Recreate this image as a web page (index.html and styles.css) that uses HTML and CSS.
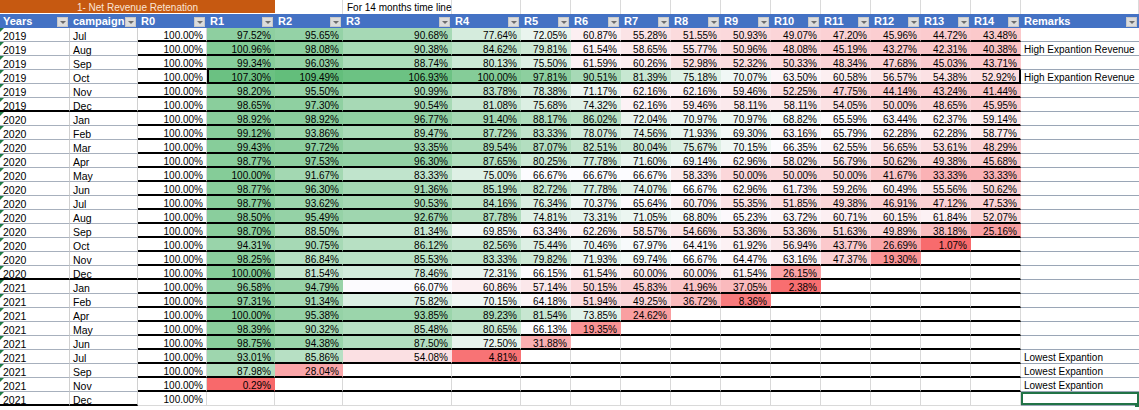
FILE: index.html
```html
<!DOCTYPE html>
<html lang="en">
<head>
<meta charset="utf-8">
<title>Net Revenue Retenation</title>
<link rel="stylesheet" href="styles.css">
</head>
<body>
<div class="sheet" id="sheet">
  <div class="cell title">1- Net Revenue Retenation</div>
  <div class="cell top"></div>
  <div class="cell top note">For 14 months time line</div>
  <div class="cell top"></div>
  <div class="cell top"></div>
  <div class="cell top"></div>
  <div class="cell top"></div>
  <div class="cell top"></div>
  <div class="cell top"></div>
  <div class="cell top"></div>
  <div class="cell top"></div>
  <div class="cell top"></div>
  <div class="cell top"></div>
  <div class="cell top"></div>
  <div class="cell top"></div>

  <div class="cell hd">Years<span class="dd"></span></div>
  <div class="cell hd">campaign<span class="dd"></span></div>
  <div class="cell hd">R0<span class="dd"></span></div>
  <div class="cell hd">R1<span class="dd"></span></div>
  <div class="cell hd">R2<span class="dd"></span></div>
  <div class="cell hd">R3<span class="dd"></span></div>
  <div class="cell hd">R4<span class="dd"></span></div>
  <div class="cell hd">R5<span class="dd"></span></div>
  <div class="cell hd">R6<span class="dd"></span></div>
  <div class="cell hd">R7<span class="dd"></span></div>
  <div class="cell hd">R8<span class="dd"></span></div>
  <div class="cell hd">R9<span class="dd"></span></div>
  <div class="cell hd">R10<span class="dd"></span></div>
  <div class="cell hd">R11<span class="dd"></span></div>
  <div class="cell hd">R12<span class="dd"></span></div>
  <div class="cell hd">R13<span class="dd"></span></div>
  <div class="cell hd">R14<span class="dd"></span></div>
  <div class="cell hd">Remarks<span class="dd"></span></div>
</div>
<script src="script.js"></script>
</body>
</html>
```

FILE: styles.css
```css
html, body {
  margin: 0;
  padding: 0;
  background: #ffffff;
  overflow: hidden;
}

body {
  width: 1139px;
  height: 410px;
  font-family: "Liberation Sans", Arial, sans-serif;
  color: #000;
}

.sheet {
  display: grid;
  grid-template-columns: 70px 68px 69px 68px 68px 109px 69px repeat(10, 50px) 118px;
  grid-auto-rows: 14px;
}

.cell {
  box-sizing: border-box;
  white-space: nowrap;
  font-size: 10px;
  line-height: 12px;
  padding-top: 2px;
}

/* row 0 */
.title {
  grid-column: span 4;
  background: #c65911;
  color: #fbe5d6;
  text-align: center;
  height: 13px;
}

.top {
  border-right: 1px solid #dadada;
}

.note {
  padding-left: 4px;
  overflow: visible;
}

/* header row */
.hd {
  position: relative;
  background: #4472c4;
  color: #ffffff;
  font-weight: bold;
  font-size: 11px;
  line-height: 13px;
  padding-top: 1px;
  padding-left: 3px;
  overflow: hidden;
}

.dd {
  position: absolute;
  right: 2px;
  top: 3px;
  width: 11px;
  height: 10px;
  background: #dcdcdc;
  box-sizing: border-box;
  border: 1px solid #c8c8c8;
}

.dd::after {
  content: "";
  position: absolute;
  left: 2px;
  top: 3px;
  border-left: 3px solid transparent;
  border-right: 3px solid transparent;
  border-top: 3px solid #6d6d6d;
}

/* data cells */
.yr,
.cp {
  font-size: 10.5px;
  padding-left: 3px;
  border-right: 1px solid #d0d0d0;
  border-bottom: 1px solid #a7b0bd;
}

.yr {
  position: relative;
}

.yr::before {
  content: "";
  position: absolute;
  left: 0;
  top: 0;
  border-top: 4px solid #1e7b45;
  border-right: 4px solid transparent;
}

.yr.end,
.cp.end {
  border-bottom: 2px solid #000;
}

.num {
  text-align: right;
  padding-right: 3px;
  border-right: 1px solid #d9d9d9;
  border-bottom: 2px solid #000;
}

.num.fill {
  border-right-color: transparent;
}

.num.last {
  border-bottom: 1px solid #d9d9d9;
}

.num.bl {
  border-left: 2px solid #000;
}

.num.br {
  border-right: 2px solid #000;
}

.rm {
  padding-left: 3px;
  border-bottom: 1px solid #9aa6b6;
}

.rm.sel {
  box-shadow: inset 0 0 0 2px #217346;
  position: relative;
}

.rm.sel::after {
  content: "";
  position: absolute;
  right: 0;
  bottom: -2px;
  width: 4px;
  height: 4px;
  background: #217346;
}
```

FILE: script.js
```js
(function () {
  var rows = [
    ['2019', 'Jul', [97.52, 95.65, 90.68, 77.64, 72.05, 60.87, 55.28, 51.55, 50.93, 49.07, 47.20, 45.96, 44.72, 43.48], ''],
    ['2019', 'Aug', [100.96, 98.08, 90.38, 84.62, 79.81, 61.54, 58.65, 55.77, 50.96, 48.08, 45.19, 43.27, 42.31, 40.38], 'High Expantion Revenue'],
    ['2019', 'Sep', [99.34, 96.03, 88.74, 80.13, 75.50, 61.59, 60.26, 52.98, 52.32, 50.33, 48.34, 47.68, 45.03, 43.71], ''],
    ['2019', 'Oct', [107.30, 109.49, 106.93, 100.00, 97.81, 90.51, 81.39, 75.18, 70.07, 63.50, 60.58, 56.57, 54.38, 52.92], 'High Expantion Revenue'],
    ['2019', 'Nov', [98.20, 95.50, 90.99, 83.78, 78.38, 71.17, 62.16, 62.16, 59.46, 52.25, 47.75, 44.14, 43.24, 41.44], ''],
    ['2019', 'Dec', [98.65, 97.30, 90.54, 81.08, 75.68, 74.32, 62.16, 59.46, 58.11, 58.11, 54.05, 50.00, 48.65, 45.95], ''],
    ['2020', 'Jan', [98.92, 98.92, 96.77, 91.40, 88.17, 86.02, 72.04, 70.97, 70.97, 68.82, 65.59, 63.44, 62.37, 59.14], ''],
    ['2020', 'Feb', [99.12, 93.86, 89.47, 87.72, 83.33, 78.07, 74.56, 71.93, 69.30, 63.16, 65.79, 62.28, 62.28, 58.77], ''],
    ['2020', 'Mar', [99.43, 97.72, 93.35, 89.54, 87.07, 82.51, 80.04, 75.67, 70.15, 66.35, 62.55, 56.65, 53.61, 48.29], ''],
    ['2020', 'Apr', [98.77, 97.53, 96.30, 87.65, 80.25, 77.78, 71.60, 69.14, 62.96, 58.02, 56.79, 50.62, 49.38, 45.68], ''],
    ['2020', 'May', [100.00, 91.67, 83.33, 75.00, 66.67, 66.67, 66.67, 58.33, 50.00, 50.00, 50.00, 41.67, 33.33, 33.33], ''],
    ['2020', 'Jun', [98.77, 96.30, 91.36, 85.19, 82.72, 77.78, 74.07, 66.67, 62.96, 61.73, 59.26, 60.49, 55.56, 50.62], ''],
    ['2020', 'Jul', [98.77, 93.62, 90.53, 84.16, 76.34, 70.37, 65.64, 60.70, 55.35, 51.85, 49.38, 46.91, 47.12, 47.53], ''],
    ['2020', 'Aug', [98.50, 95.49, 92.67, 87.78, 74.81, 73.31, 71.05, 68.80, 65.23, 63.72, 60.71, 60.15, 61.84, 52.07], ''],
    ['2020', 'Sep', [98.70, 88.50, 81.34, 69.85, 63.34, 62.26, 58.57, 54.66, 53.36, 53.36, 51.63, 49.89, 38.18, 25.16], ''],
    ['2020', 'Oct', [94.31, 90.75, 86.12, 82.56, 75.44, 70.46, 67.97, 64.41, 61.92, 56.94, 43.77, 26.69, 1.07], ''],
    ['2020', 'Nov', [98.25, 86.84, 85.53, 83.33, 79.82, 71.93, 69.74, 66.67, 64.47, 63.16, 47.37, 19.30], ''],
    ['2020', 'Dec', [100.00, 81.54, 78.46, 72.31, 66.15, 61.54, 60.00, 60.00, 61.54, 26.15], ''],
    ['2021', 'Jan', [96.58, 94.79, 66.07, 60.86, 57.14, 50.15, 45.83, 41.96, 37.05, 2.38], ''],
    ['2021', 'Feb', [97.31, 91.34, 75.82, 70.15, 64.18, 51.94, 49.25, 36.72, 8.36], ''],
    ['2021', 'Apr', [100.00, 95.38, 93.85, 89.23, 81.54, 73.85, 24.62], ''],
    ['2021', 'May', [98.39, 90.32, 85.48, 80.65, 66.13, 19.35], ''],
    ['2021', 'Jun', [98.75, 94.38, 87.50, 72.50, 31.88], ''],
    ['2021', 'Jul', [93.01, 85.86, 54.08, 4.81], 'Lowest Expantion'],
    ['2021', 'Sep', [87.98, 28.04], 'Lowest Expantion'],
    ['2021', 'Nov', [0.29], 'Lowest Expantion'],
    ['2021', 'Dec', [], '']
  ];

  // 3-colour scale: lowest red, 50th percentile white, highest green
  var all = [];
  rows.forEach(function (r) { all = all.concat(r[2]); });
  var sorted = all.slice().sort(function (a, b) { return a - b; });
  var lo = sorted[0], hi = sorted[sorted.length - 1];
  var pos = (sorted.length - 1) * 0.5;
  var base = Math.floor(pos);
  var mid = sorted[base] + (sorted[Math.min(base + 1, sorted.length - 1)] - sorted[base]) * (pos - base);

  var RED = [248, 105, 107], WHITE = [252, 252, 255], GREEN = [99, 190, 123];
  function mix(a, b, t) {
    return 'rgb(' + [0, 1, 2].map(function (i) { return Math.round(a[i] + (b[i] - a[i]) * t); }).join(',') + ')';
  }
  function colour(v) {
    if (v >= mid) return mix(WHITE, GREEN, (v - mid) / (hi - mid));
    return mix(WHITE, RED, (mid - v) / (mid - lo));
  }

  var sheet = document.getElementById('sheet');
  function add(cls, text) {
    var d = document.createElement('div');
    d.className = 'cell ' + cls;
    if (text) d.textContent = text;
    sheet.appendChild(d);
    return d;
  }

  rows.forEach(function (r, i) {
    var last = i === rows.length - 1;
    var yearEnd = last || rows[i + 1][0] !== r[0];
    add('yr' + (yearEnd ? ' end' : ''), r[0]);
    add('cp' + (yearEnd ? ' end' : ''), r[1]);
    add('num' + (last ? ' last' : ''), '100.00%');
    for (var k = 0; k < 14; k++) {
      var v = r[2][k];
      var cls = 'num' + (last ? ' last' : '');
      if (r[1] === 'Oct' && r[0] === '2019') {
        if (k === 0) cls += ' bl';
        if (k === 13) cls += ' br';
      }
      if (v !== undefined) cls += ' fill';
      var c = add(cls, v !== undefined ? v.toFixed(2) + '%' : '');
      if (v !== undefined) c.style.background = colour(v);
    }
    add('rm' + (last ? ' sel' : ''), r[3]);
  });
})();
```
